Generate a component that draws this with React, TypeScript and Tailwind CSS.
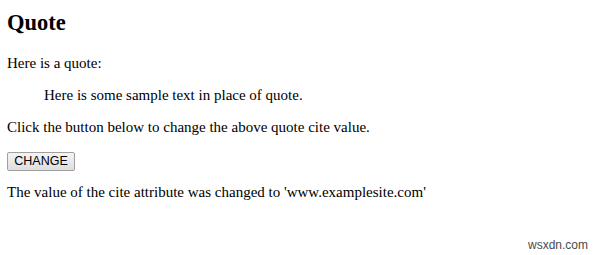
export default function App() {
  return (
    <div className="relative h-[255px] w-[600px] overflow-hidden bg-white text-black font-['Liberation_Serif',serif]">
      <div className="pl-[7px] pt-[10px]">
        <h2 className="text-[22.5px] font-bold leading-[26px]">Quote</h2>
        <p className="mt-[19px] text-[15px] leading-[17px]">Here is a quote:</p>
        <blockquote className="mt-[15px] ml-[37px] text-[15px] leading-[17px]">
          Here is some sample text in place of quote.
        </blockquote>
        <p className="mt-[15px] text-[15px] leading-[17px]">
          Click the button below to change the above quote cite value.
        </p>
        <button className="mt-[16px] block h-[19px] w-[68px] rounded-[2px] border border-[#a0a0a0] bg-gradient-to-b from-[#f4f4f4] to-[#dedede] font-['Liberation_Sans',sans-serif] text-[12.5px] leading-[17px] text-black">
          CHANGE
        </button>
        <p className="mt-[13px] text-[15px] leading-[17px]">
          The value of the cite attribute was changed to 'www.examplesite.com'
        </p>
      </div>
      <div className="absolute bottom-[3px] right-[12px] font-['Liberation_Sans',sans-serif] text-[12px] leading-[14px] text-[#4a4a4a]">
        wsxdn.com
      </div>
    </div>
  );
}
